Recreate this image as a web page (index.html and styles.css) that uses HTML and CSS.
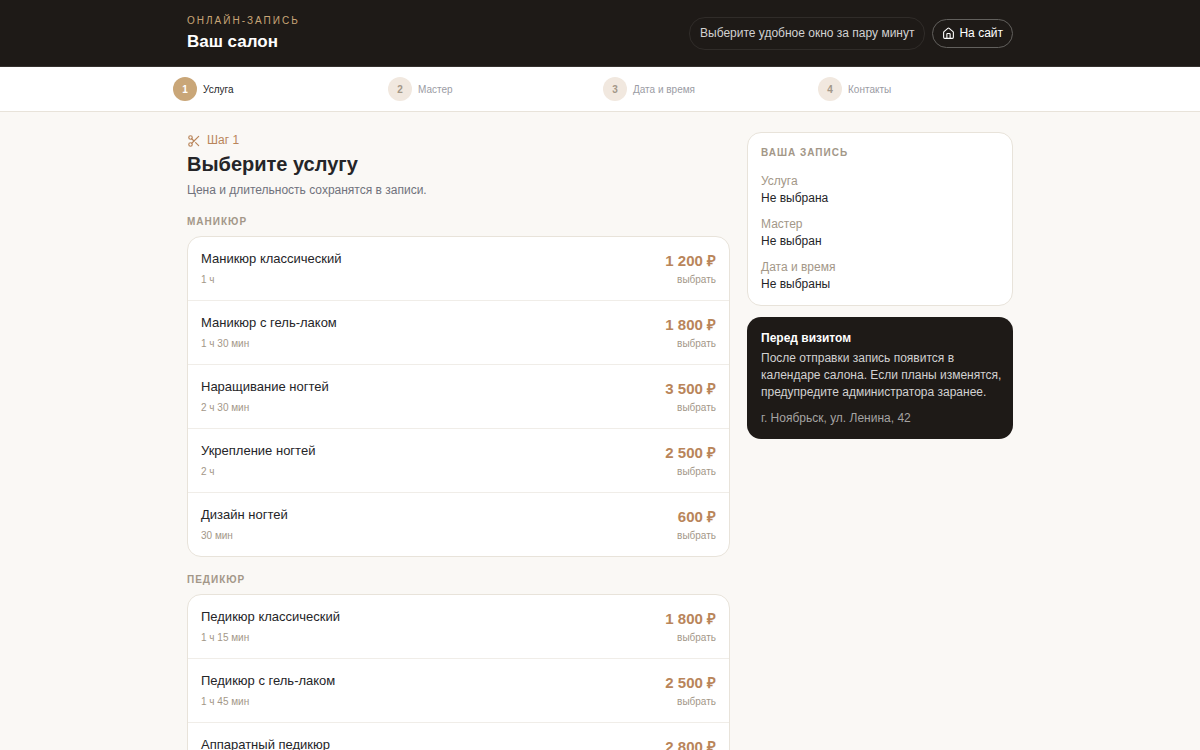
FILE: index.html
```
<!DOCTYPE html>
<html lang="ru">
<head>
  <meta charset="UTF-8" />
  <meta name="viewport" content="width=device-width, initial-scale=1.0"/>
  <title>Онлайн-запись - Ваш салон</title>
  <link rel="stylesheet" href="styles.css">
</head>
<body>
  <header class="header">
    <div class="header-inner">
      <div class="brand">
        <p class="brand-label">Онлайн-запись</p>
        <p class="brand-name">Ваш салон</p>
      </div>
      <div class="header-actions">
        <span class="hint">Выберите удобное окно за пару минут</span>
        <a class="site-link" href="/">
          <svg class="icon" viewBox="0 0 24 24"><path d="M15 21v-8a1 1 0 0 0-1-1h-4a1 1 0 0 0-1 1v8"/><path d="M3 10a2 2 0 0 1 .709-1.528l7-5.999a2 2 0 0 1 2.582 0l7 5.999A2 2 0 0 1 21 10v9a2 2 0 0 1-2 2H5a2 2 0 0 1-2-2z"/></svg>
          На сайт
        </a>
      </div>
    </div>
  </header>

  <nav class="steps">
    <ol class="steps-list">
      <li class="step active"><span class="step-num">1</span>Услуга</li>
      <li class="step"><span class="step-num">2</span>Мастер</li>
      <li class="step"><span class="step-num">3</span>Дата и время</li>
      <li class="step"><span class="step-num">4</span>Контакты</li>
    </ol>
  </nav>

  <main class="content">
    <section class="services">
      <p class="step-label">
        <svg class="icon" viewBox="0 0 24 24"><circle cx="6" cy="6" r="3"/><path d="M8.12 8.12 12 12"/><path d="M20 4 8.12 15.88"/><circle cx="6" cy="18" r="3"/><path d="M14.8 14.8 20 20"/></svg>
        Шаг 1
      </p>
      <h1>Выберите услугу</h1>
      <p class="subheading">Цена и длительность сохранятся в записи.</p>

      <h2 class="label">Маникюр</h2>
      <div class="card service-list">
        <button type="button" class="service">
          <span class="info"><span class="name">Маникюр классический</span><span class="small">1 ч</span></span>
          <span class="cost"><span class="price">1 200 ₽</span><span class="small">выбрать</span></span>
        </button>
        <button type="button" class="service">
          <span class="info"><span class="name">Маникюр с гель-лаком</span><span class="small">1 ч 30 мин</span></span>
          <span class="cost"><span class="price">1 800 ₽</span><span class="small">выбрать</span></span>
        </button>
        <button type="button" class="service">
          <span class="info"><span class="name">Наращивание ногтей</span><span class="small">2 ч 30 мин</span></span>
          <span class="cost"><span class="price">3 500 ₽</span><span class="small">выбрать</span></span>
        </button>
        <button type="button" class="service">
          <span class="info"><span class="name">Укрепление ногтей</span><span class="small">2 ч</span></span>
          <span class="cost"><span class="price">2 500 ₽</span><span class="small">выбрать</span></span>
        </button>
        <button type="button" class="service">
          <span class="info"><span class="name">Дизайн ногтей</span><span class="small">30 мин</span></span>
          <span class="cost"><span class="price">600 ₽</span><span class="small">выбрать</span></span>
        </button>
      </div>

      <h2 class="label">Педикюр</h2>
      <div class="card service-list">
        <button type="button" class="service">
          <span class="info"><span class="name">Педикюр классический</span><span class="small">1 ч 15 мин</span></span>
          <span class="cost"><span class="price">1 800 ₽</span><span class="small">выбрать</span></span>
        </button>
        <button type="button" class="service">
          <span class="info"><span class="name">Педикюр с гель-лаком</span><span class="small">1 ч 45 мин</span></span>
          <span class="cost"><span class="price">2 500 ₽</span><span class="small">выбрать</span></span>
        </button>
        <button type="button" class="service">
          <span class="info"><span class="name">Аппаратный педикюр</span><span class="small">1 ч 30 мин</span></span>
          <span class="cost"><span class="price">2 800 ₽</span><span class="small">выбрать</span></span>
        </button>
      </div>
    </section>

    <aside class="sidebar">
      <div class="card summary">
        <h2 class="label">Ваша запись</h2>
        <dl>
          <div><dt>Услуга</dt><dd>Не выбрана</dd></div>
          <div><dt>Мастер</dt><dd>Не выбран</dd></div>
          <div><dt>Дата и время</dt><dd>Не выбраны</dd></div>
        </dl>
      </div>
      <div class="note">
        <h3>Перед визитом</h3>
        <p>После отправки запись появится в календаре салона. Если планы изменятся, предупредите администратора заранее.</p>
        <p class="address">г. Ноябрьск, ул. Ленина, 42</p>
      </div>
    </aside>
  </main>
</body>
</html>
```

FILE: styles.css
```
* {
  margin: 0;
  padding: 0;
  box-sizing: border-box;
}

body {
  background: #faf8f5;
  color: #252528;
  font-family: "Liberation Sans", Arial, sans-serif;
  font-size: 12px;
  line-height: 17px;
}

.icon {
  width: 13px;
  height: 13px;
  fill: none;
  stroke: currentColor;
  stroke-width: 2;
  stroke-linecap: round;
  stroke-linejoin: round;
}

/* Header */
.header {
  background: #1e1a17;
  border-bottom: 1px solid #35312e;
}

.header-inner {
  display: flex;
  align-items: center;
  justify-content: space-between;
  max-width: 854px;
  margin: 0 auto;
  padding: 13px 14px;
}

.brand-label {
  color: #c9a678;
  font-size: 10px;
  line-height: 15px;
  letter-spacing: 2px;
  text-transform: uppercase;
}

.brand-name {
  color: #fff;
  font-size: 17px;
  line-height: 23px;
  font-weight: bold;
  margin-top: 2px;
}

.header-actions {
  display: flex;
  align-items: center;
  gap: 7px;
}

.hint {
  border: 1px solid #302c29;
  border-radius: 16px;
  padding: 7px 10px;
  color: #d2d1d1;
}

.site-link {
  display: flex;
  align-items: center;
  gap: 4px;
  border: 1px solid #62605d;
  border-radius: 15px;
  padding: 5px 9px;
  color: #fff;
  text-decoration: none;
}

/* Steps */
.steps {
  background: #fff;
  border-bottom: 1px solid #e8e3da;
}

.steps-list {
  display: grid;
  grid-template-columns: repeat(4, 1fr);
  gap: 6px;
  max-width: 854px;
  margin: 0 auto;
  padding: 10px 0;
  list-style: none;
}

.step {
  display: flex;
  align-items: center;
  gap: 6px;
  color: #9b9ca4;
  font-size: 10px;
}

.step-num {
  display: flex;
  align-items: center;
  justify-content: center;
  width: 24px;
  height: 24px;
  border-radius: 50%;
  background: #f1e8df;
  color: #a39788;
  font-weight: bold;
}

.step.active {
  color: #252528;
}

.step.active .step-num {
  background: #c9a678;
  color: #fff;
}

/* Content */
.content {
  display: grid;
  grid-template-columns: 1fr 266px;
  gap: 17px;
  align-items: start;
  max-width: 854px;
  margin: 0 auto;
  padding: 20px 14px;
}

.step-label {
  display: flex;
  align-items: center;
  gap: 6px;
  color: #b9855a;
}

.step-label .icon {
  width: 14px;
  height: 14px;
}

h1 {
  font-size: 20px;
  line-height: 27px;
  margin-top: 2px;
}

.subheading {
  color: #70727c;
  margin-top: 4px;
}

.label {
  color: #a39788;
  font-size: 10px;
  line-height: 13px;
  letter-spacing: 1px;
  text-transform: uppercase;
}

.services .label {
  margin: 16px 0 8px;
}

.card {
  background: #fff;
  border: 1px solid #e8e3da;
  border-radius: 14px;
}

.service-list {
  overflow: hidden;
}

.service {
  display: flex;
  align-items: center;
  justify-content: space-between;
  width: 100%;
  padding: 13px;
  border: none;
  background: none;
  color: inherit;
  font: inherit;
  text-align: left;
  cursor: pointer;
}

.service + .service {
  border-top: 1px solid #f0ede8;
}

.service:hover {
  background: #fdfbf8;
}

.info,
.cost {
  display: flex;
  flex-direction: column;
}

.cost {
  align-items: flex-end;
}

.name {
  font-size: 13px;
  line-height: 18px;
  margin-bottom: 4px;
}

.price {
  color: #b9855a;
  font-size: 15px;
  line-height: 22px;
  font-weight: bold;
}

.small {
  color: #a39788;
  font-size: 10px;
  line-height: 15px;
}

/* Sidebar */
.sidebar {
  display: flex;
  flex-direction: column;
  gap: 11px;
}

.summary {
  padding: 13px 13px 12px;
}

.summary dl {
  display: flex;
  flex-direction: column;
  gap: 9px;
  margin-top: 14px;
}

.summary dt {
  color: #a39788;
}

.note {
  background: #1e1a17;
  border-radius: 14px;
  padding: 13px 10px 12px 14px;
  color: #d2d1d1;
}

.note h3 {
  color: #fff;
  font-size: 12px;
  margin-bottom: 3px;
}

.note .address {
  color: #a5a3a2;
  margin-top: 9px;
}
```
